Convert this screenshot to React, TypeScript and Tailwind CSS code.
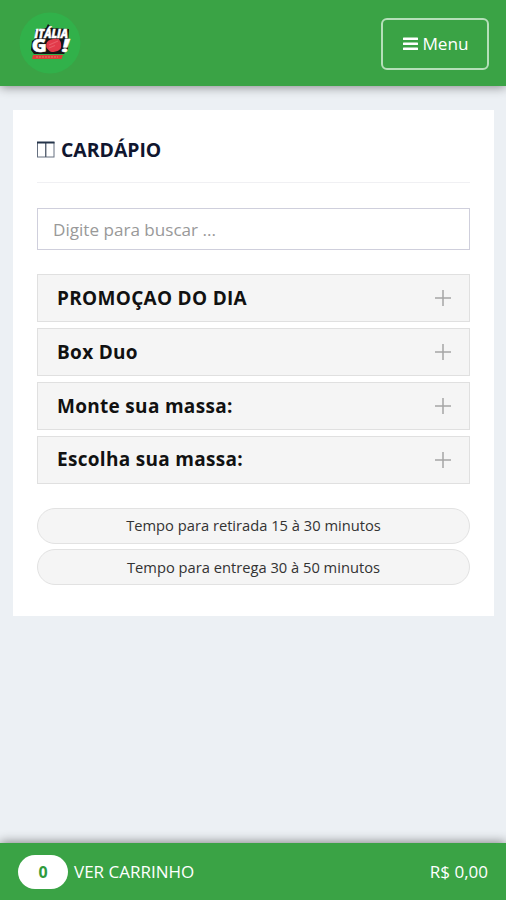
import React, { useState } from 'react';

const categories = ['PROMOÇAO DO DIA', 'Box Duo', 'Monte sua massa:', 'Escolha sua massa:'];

const deliveryTimes = [
  'Tempo para retirada 15 à 30 minutos',
  'Tempo para entrega 30 à 50 minutos',
];

const Logo: React.FC = () => (
  <svg className="w-[62px] h-[62px]" viewBox="0 0 62 62" role="img" aria-label="Itália Go!">
    <circle cx="31" cy="31" r="30.5" fill="#31b14a" />
    <path d="M16 18L27 16L29 12L33 16L50 17L49 37L45 42H15L12 38L13 29L16 27Z" fill="#151515" />
    <g
      fontFamily="Open Sans, sans-serif"
      fontWeight="800"
      fill="#fff"
      stroke="#fff"
      strokeWidth="0.5"
      strokeLinejoin="round"
    >
      <text x="15.5" y="26" fontSize="11.5" textLength="33.5" lengthAdjust="spacingAndGlyphs" fontStyle="italic">ITÁLIA</text>
      <text x="12.8" y="40" fontSize="17.5" textLength="15" lengthAdjust="spacingAndGlyphs">G</text>
      <text x="43" y="39.5" fontSize="17" textLength="7" lengthAdjust="spacingAndGlyphs" fontStyle="italic">!</text>
    </g>
    <path d="M28 30Q32 26 40 27Q43.5 32 41.5 37Q37 41.5 31 39.5Q25 35 28 30Z" fill="#e23a4a" />
    <path d="M30 33L39 29M30 36L36 33.5" stroke="#ea5c68" strokeWidth="1.2" />
    <path d="M14 43H44L42.5 47H13Z" fill="#dc3f37" />
    <path d="M17 45H39" stroke="#e8746a" strokeWidth="1" strokeDasharray="2 1" />
  </svg>
);

const MenuBars: React.FC = () => (
  <svg className="w-[15px] h-[14px]" viewBox="0 0 15 14" fill="currentColor">
    <rect y="0.5" width="15" height="2.6" rx="0.6" />
    <rect y="5.5" width="15" height="2.6" rx="0.6" />
    <rect y="10.5" width="15" height="2.6" rx="0.6" />
  </svg>
);

const ColumnsIcon: React.FC = () => (
  <svg className="w-[18px] h-[17px]" viewBox="0 0 18 17" fill="none" stroke="#667080">
    <rect x="0.5" y="1.5" width="16.5" height="14.5" />
    <path d="M8.75 2V16" stroke="#4b5666" strokeWidth="1.3" />
    <path d="M0 1.5H17.5" stroke="#25344a" strokeWidth="2" />
  </svg>
);

export default function App() {
  const [search, setSearch] = useState('');

  return (
    <div className="h-[900px] flex flex-col bg-[#ecf0f4] text-[#111] font-['Open_Sans',sans-serif]">
      {/* Header */}
      <header className="relative h-[86px] shrink-0 flex items-center justify-between pl-[19px] pr-[17px] bg-[#3aa345] shadow-[0_1px_10px_rgba(0,0,0,0.45)]">
        <Logo />
        <button className="w-[108px] h-[52px] mt-px flex items-center justify-center gap-1 pl-[2px] pt-px rounded-[6px] border-2 border-[#b5dfb9] text-white text-[17.2px] font-medium">
          <MenuBars />
          <span>Menu</span>
        </button>
      </header>

      {/* Menu card */}
      <main className="grow pt-6 pl-[13px] pr-3">
        <section className="h-[506px] bg-white px-6">
          <h1 className="h-[73px] pt-[7px] flex items-center gap-[6px] border-b border-[#f0f0f3] text-[19.4px] font-bold text-[#10162f]">
            <ColumnsIcon />
            <span>CARDÁPIO</span>
          </h1>

          <input
            value={search}
            onChange={(e) => setSearch(e.target.value)}
            placeholder="Digite para buscar ..."
            className="block w-[433px] h-[42px] mt-[25px] px-[15px] pt-px border border-[#cfcfdc] text-[17.1px] outline-none placeholder:text-[#999]"
          />

          <div className="mt-[24.3px] w-[433px] flex flex-col gap-[5.8px]">
            {categories.map((name) => (
              <button
                key={name}
                className="h-12 pl-[19px] pr-[18px] flex items-center justify-between border border-[#e0e0e0] bg-[#f5f5f5] text-[19px] tracking-[0.3px] font-bold"
              >
                <span>{name}</span>
                <svg className="w-4 h-4" viewBox="0 0 16 16" stroke="#a5a5a5" strokeWidth="1.5">
                  <path d="M0 8H16M8 0V16" />
                </svg>
              </button>
            ))}
          </div>

          <div className="mt-[24.3px] w-[433px] flex flex-col gap-[5.4px]">
            {deliveryTimes.map((text) => (
              <div
                key={text}
                className="h-9 pb-px flex items-center justify-center rounded-full border border-[#e2e2e2] bg-[#f5f5f5] text-[14.7px] text-[#333]"
              >
                {text}
              </div>
            ))}
          </div>
        </section>
      </main>

      {/* Cart bar */}
      <footer className="relative h-[57px] shrink-0 pl-[18px] pr-[18px] flex items-center justify-between bg-[#3aa345] text-white text-[17px] font-medium shadow-[0_-1px_10px_rgba(0,0,0,0.45)]">
        <div className="flex items-center gap-[6px]">
          <span className="w-[50px] h-[34px] flex items-center justify-center rounded-full bg-white text-[#2f9b3d] text-[16px] font-bold">0</span>
          <span className="pt-px">VER CARRINHO</span>
        </div>
        <span className="pt-px">R$ 0,00</span>
      </footer>
    </div>
  );
}
